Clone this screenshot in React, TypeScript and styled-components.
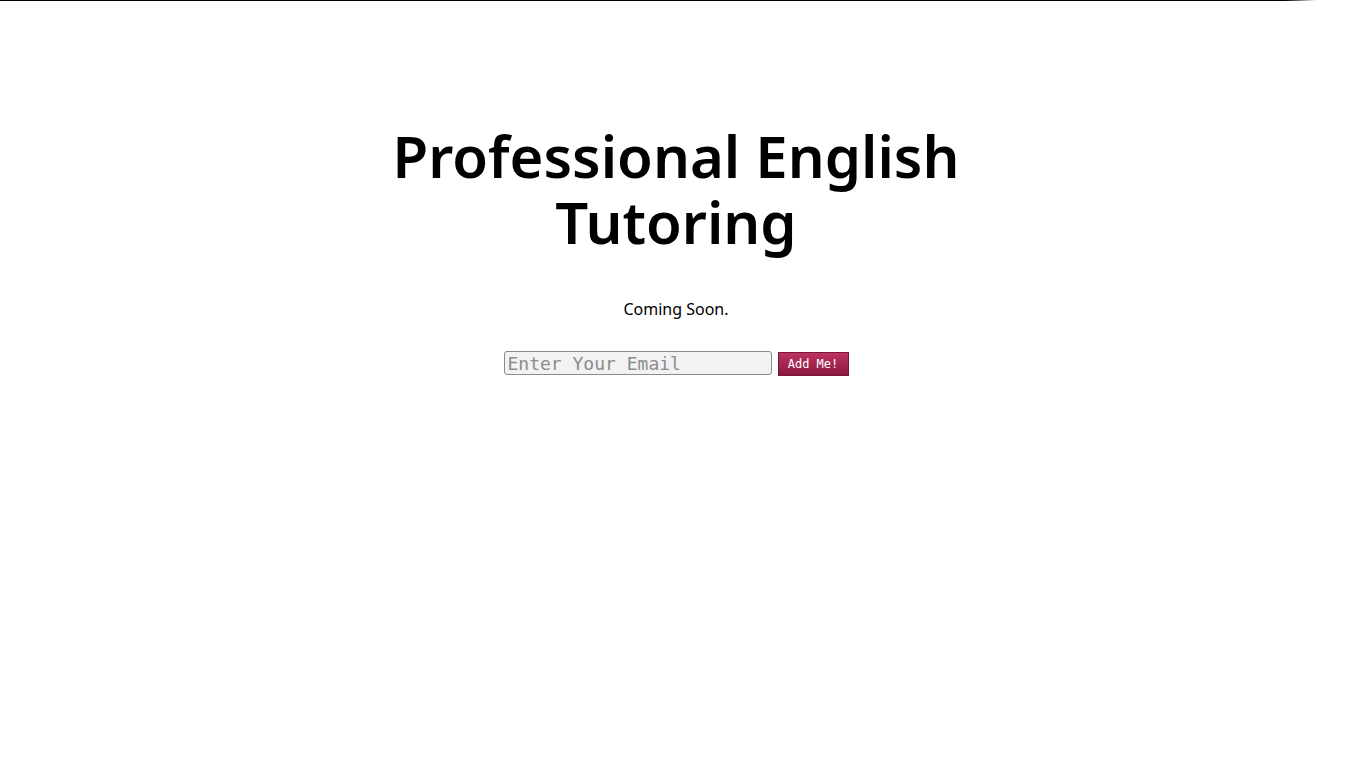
import React from "react";
import styled, { createGlobalStyle } from "styled-components";

const Global = createGlobalStyle`
  html, body { margin: 0; padding: 0; background: #fff; }
  body { font-family: "Noto Sans", sans-serif; color: #000; }
`;

const TopRule = styled.div`
  height: 1px;
  width: 100%;
  background: linear-gradient(to right, #000 0, #000 1285px, #fff 1316px, #fff 100%);
`;

const Main = styled.main`
  display: flex;
  flex-direction: column;
  align-items: center;
  padding: 122px 14px 0 0;
`;

const Title = styled.h1`
  margin: 0;
  width: 600px;
  text-align: center;
  font-family: "Noto Sans", sans-serif;
  font-weight: 600;
  font-size: 58px;
  line-height: 66px;
`;

const Sub = styled.p`
  margin: 43px 0 0;
  font-size: 16px;
  line-height: 22px;
`;

const Form = styled.form`
  display: flex;
  align-items: flex-start;
  gap: 6px;
  margin-top: 31px;
`;

const EmailInput = styled.input`
  box-sizing: border-box;
  width: 268px;
  height: 24px;
  padding: 0 3px;
  border: 1px solid #8a8a8a;
  border-radius: 3px;
  background: #f2f2f2;
  font-family: "DejaVu Sans Mono", monospace;
  font-size: 18px;
  color: #333;
  &::placeholder { color: #8c8c8c; }
`;

const AddButton = styled.button`
  box-sizing: border-box;
  width: 71px;
  height: 24px;
  margin-top: 1px;
  border: 1px solid #7a1636;
  background: linear-gradient(to bottom, #bd3260, #8a1b40);
  color: #fff;
  font-family: "DejaVu Sans Mono", monospace;
  font-size: 12px;
  padding: 0;
  cursor: pointer;
`;

export default function App() {
  return (
    <>
      <Global />
      <TopRule />
      <Main>
        <Title>Professional English Tutoring</Title>
        <Sub>Coming Soon.</Sub>
        <Form onSubmit={(e) => e.preventDefault()}>
          <EmailInput type="email" placeholder="Enter Your Email" />
          <AddButton type="submit">Add Me!</AddButton>
        </Form>
      </Main>
    </>
  );
}
